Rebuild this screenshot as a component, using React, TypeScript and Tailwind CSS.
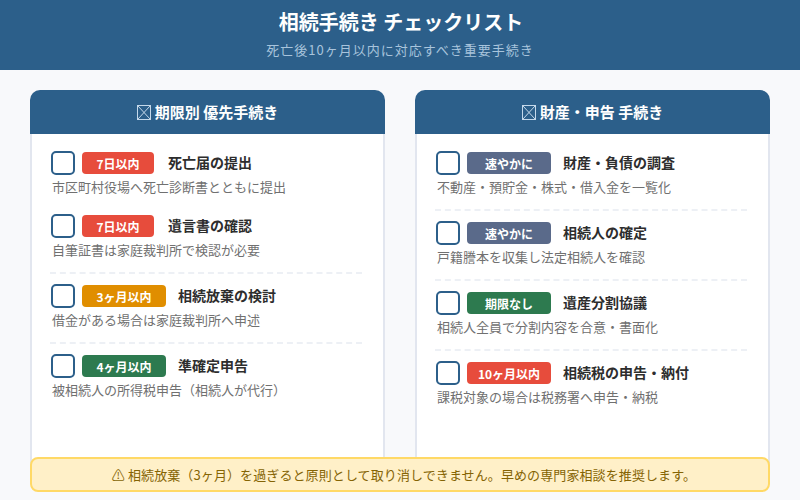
const leftItems = [
  { badge: '7日以内', badgeClass: 'bg-[#e74c3c] w-[72px] mr-[14px]', title: '死亡届の提出', desc: '市区町村役場へ死亡診断書とともに提出', divider: false },
  { badge: '7日以内', badgeClass: 'bg-[#e74c3c] w-[72px] mr-[14px]', title: '遺言書の確認', desc: '自筆証書は家庭裁判所で検認が必要', divider: true },
  { badge: '3ヶ月以内', badgeClass: 'bg-[#e08e00] w-[84px] mr-3', title: '相続放棄の検討', desc: '借金がある場合は家庭裁判所へ申述', divider: true },
  { badge: '4ヶ月以内', badgeClass: 'bg-[#2d7a4f] w-[84px] mr-3', title: '準確定申告', desc: '被相続人の所得税申告（相続人が代行）', divider: false },
];

const rightItems = [
  { badge: '速やかに', badgeClass: 'bg-[#5a6a8a] w-[84px] mr-3', title: '財産・負債の調査', desc: '不動産・預貯金・株式・借入金を一覧化', divider: true },
  { badge: '速やかに', badgeClass: 'bg-[#5a6a8a] w-[84px] mr-3', title: '相続人の確定', desc: '戸籍謄本を収集し法定相続人を確認', divider: true },
  { badge: '期限なし', badgeClass: 'bg-[#2d7a4f] w-[84px] mr-3', title: '遺産分割協議', desc: '相続人全員で分割内容を合意・書面化', divider: true },
  { badge: '10ヶ月以内', badgeClass: 'bg-[#e74c3c] w-[84px] mr-3', title: '相続税の申告・納付', desc: '課税対象の場合は税務署へ申告・納税', divider: false },
];

type Item = (typeof leftItems)[number];

function Row({ item }: { item: Item }) {
  return (
    <div className={item.divider ? 'pb-3 mb-[10px] border-b-2 border-dashed border-[#edf0f5]' : 'pb-[7px] mb-[10px]'}>
      <div className="flex items-center h-6 ml-px">
        <div className="w-6 h-6 rounded-[5px] border-2 border-[#2c5f8a] mr-[7px] shrink-0" />
        <span className={`h-[22px] pt-[2px] rounded-[4px] flex items-center justify-center text-white text-[12px] font-bold shrink-0 ${item.badgeClass}`}>
          {item.badge}
        </span>
        <span className="mb-[2px] text-[14px] font-bold text-[#2d2d2d]">{item.title}</span>
      </div>
      <p className="text-[13px] leading-[20px] text-[#707070] mt-[2px] ml-[2px]">{item.desc}</p>
    </div>
  );
}

function Card({ heading, items }: { heading: string; items: Item[] }) {
  return (
    <section className="flex-1 flex flex-col">
      <h2 className="h-11 shrink-0 rounded-t-[10px] bg-[#2c5f8a] text-white text-[15px] font-bold flex items-center justify-center gap-1">
        {/* missing-glyph box, same as the one in the picture */}
        <svg width="14" height="15" viewBox="0 0 14 15" fill="none" stroke="#c4d8ea" strokeWidth="1">
          <rect x="0.5" y="0.5" width="13" height="14" />
          <path d="M1 1l12 13M13 1L1 14" />
        </svg>
        {heading}
      </h2>
      <div className="flex-1 rounded-b-[10px] bg-white border-x-2 border-b-2 border-[#e2e6ef] pt-[17px] pl-[18px] pr-[21px]">
        {items.map((item) => (
          <Row key={item.title} item={item} />
        ))}
      </div>
    </section>
  );
}

export default function App() {
  return (
    <div className="relative w-[800px] h-[500px] bg-[#f8f9fb] font-['Noto_Sans_CJK_JP','Noto_Sans',sans-serif] flex flex-col">
      <header className="h-[70px] shrink-0 bg-[#2c5f8a] flex flex-col items-center pt-2">
        <h1 className="pl-[2px] text-[20px] leading-[28px] font-bold text-white">相続手続き チェックリスト</h1>
        <p className="text-[13px] leading-[20px] tracking-[1px] text-[#a8c4dc] mt-[4px]">死亡後10ヶ月以内に対応すべき重要手続き</p>
      </header>
      <main className="flex-1 min-h-0 flex gap-[30px] px-[30px] pt-5 pb-5">
        <Card heading="期限別 優先手続き" items={leftItems} />
        <Card heading="財産・申告 手続き" items={rightItems} />
      </main>
      <div className="absolute left-[30px] right-[30px] bottom-2 h-[35px] pl-2 rounded-lg border-2 border-[#ffd966] bg-[#fff0c8] flex items-center justify-center text-[13px] tracking-[0.1px] text-[#856404]">
        {'⚠\uFE0E 相続放棄（3ヶ月）を過ぎると原則として取り消しできません。早めの専門家相談を推奨します。'}
      </div>
    </div>
  );
}
